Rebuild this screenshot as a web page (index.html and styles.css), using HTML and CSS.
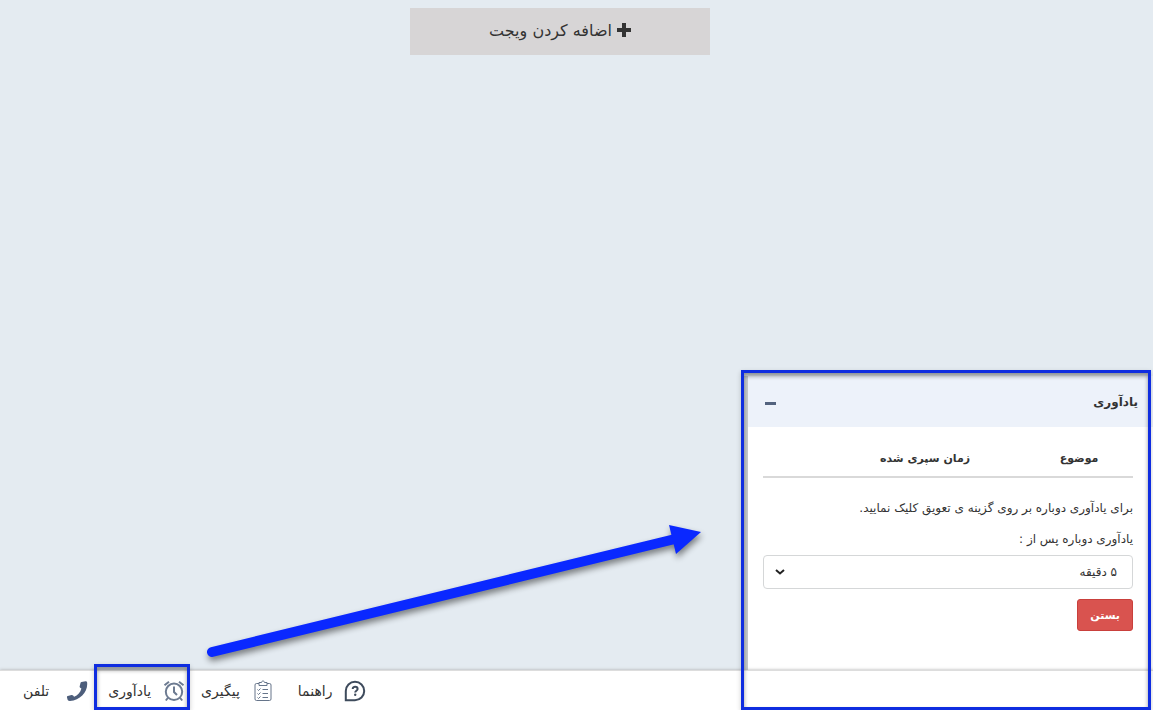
FILE: index.html
```html
<!DOCTYPE html>
<html lang="fa" dir="rtl">
<head>
<meta charset="utf-8">
<title>یادآوری</title>
<link rel="stylesheet" href="styles.css">
</head>
<body>
<main class="desk">
  <button class="add-widget" type="button">
    <svg class="plus" viewBox="0 0 14 14" aria-hidden="true"><path d="M5 0h4v5h5v4H9v5H5V9H0V5h5z"/></svg>
    <span>اضافه کردن ویجت</span>
  </button>
  <section class="panel">
    <header class="panel-head">
      <h2 class="panel-title">یادآوری</h2>
      <button class="minimize" type="button" aria-label="کوچک کردن"><span class="dash"></span></button>
    </header>
    <div class="panel-body">
      <table class="reminders">
        <thead><tr><th class="subject">موضوع</th><th class="elapsed">زمان سپری شده</th><th class="rest"></th></tr></thead>
      </table>
      <p class="hint">برای یادآوری دوباره بر روی گزینه ی تعویق کلیک نمایید.</p>
      <label class="hint" for="snooze">یادآوری دوباره پس از :</label>
      <div class="select-wrap">
        <select class="snooze" id="snooze"><option>۵ دقیقه</option></select>
        <svg class="chevron" viewBox="0 0 10 6" aria-hidden="true"><path d="M1 1 5 4.500 9 1"/></svg>
      </div>
      <button class="close" type="button">بستن</button>
    </div>
  </section>
</main>
<footer class="taskbar">
  <a class="task help" href="#">
    <svg class="icon" viewBox="0 0 22 22" aria-hidden="true"><path class="line" d="M1.800 20.200V11A9.200 9.200 0 1 1 11 20.200Z"/><path class="line" d="M8.700 9c0-3 4.900-2.900 4.900 0 0 1.700-2.400 1.700-2.400 3.400"/><circle class="dot" cx="11.200" cy="14.800" r="1.200"/></svg>
    <span>راهنما</span>
  </a>
  <a class="task follow" href="#">
    <svg class="icon" viewBox="0 0 22 22" aria-hidden="true"><path class="line thin" d="M7 3.500H4.500a1.500 1.500 0 0 0-1.500 1.500v14a1.500 1.500 0 0 0 1.500 1.500h13a1.500 1.500 0 0 0 1.500-1.500V5a1.500 1.500 0 0 0-1.500-1.500H15M7 5.500v-3h2.500c0-2 3-2 3 0H15v3zM5.500 9.500l1 1 2-2M5.500 13.500l1 1 2-2M5.500 17.500l1 1 2-2M10.500 9.500H16M10.500 13.500H16M10.500 17.500H16"/></svg>
    <span>پیگیری</span>
  </a>
  <a class="task reminder" href="#">
    <svg class="icon" viewBox="0 0 22 22" aria-hidden="true"><circle class="line soft" cx="11" cy="11.800" r="8.200"/><path class="line soft" d="M11 6.500V12l3 3M1.500 5.300 6 1.700M16 1.700l4.500 3.600M4.800 18l-2 2.500M17.200 18l2 2.500"/></svg>
    <span>یادآوری</span>
  </a>
  <a class="task phone" href="#">
    <svg class="icon" viewBox="0 0 22 22" aria-hidden="true"><path class="fill" d="M15.500 2 19.500 1.200q1.300-.2 1.600 1C22.300 11.500 14.500 20.500 4 21q-1.700 0-2.300-1L1 17.500q-.3-1.200.8-1.500l3.700-1q1-.2 1.600.5l1 1.200c3.600-1.200 6.400-4.200 7.300-8.100l-1.200-.9q-.8-.6-.5-1.500l.8-3.200q.2-.8 1-1z"/></svg>
    <span>تلفن</span>
  </a>
</footer>
<div class="mark mark-panel"></div>
<div class="mark mark-task"></div>
<svg class="arrow" viewBox="0 0 510 150" aria-hidden="true"><path class="shaft" d="M17 137 480 24"/><path class="tip" d="m474 10 32 7-25 22z"/></svg>
</body>
</html>
```
FILE: styles.css
```css
* { box-sizing: border-box; }
body {
  margin: 0;
  height: 100vh;
  display: flex;
  flex-direction: column;
  overflow: hidden;
  position: relative;
  background: #e4ebf1;
  color: #333;
  font-family: "DejaVu Sans", sans-serif;
  font-size: 12px;
}
button, select { font: inherit; color: inherit; }
.desk {
  flex: 1;
  display: flex;
  flex-direction: column;
  justify-content: space-between;
  padding-top: 8px;
}
.add-widget {
  align-self: center;
  display: flex;
  align-items: center;
  justify-content: center;
  gap: 5px;
  width: 300px;
  height: 47px;
  margin-right: 33px;
  padding-bottom: 4px;
  border: 0;
  background: #d7d5d6;
  font-size: 16px;
}
.plus { width: 14px; height: 14px; fill: #333; }
.panel {
  width: 405px;
  min-height: 294px;
  background: #fff;
  box-shadow: -4px 0 0 #c5c9cd;
}
.panel-head {
  display: flex;
  align-items: center;
  justify-content: space-between;
  height: 51px;
  padding: 0 15px 0 17px;
  background: #edf2fa;
}
.panel-title { margin: 0; font-size: 12px; font-weight: bold; }
.minimize { padding: 8px 0 4px; border: 0; background: none; }
.dash { display: block; width: 11px; height: 3px; background: #53637e; }
.panel-body { padding: 15px 20px 0 15px; }
.reminders { width: 100%; border-collapse: collapse; margin-bottom: 20px; table-layout: fixed; }
.reminders th { height: 35px; padding: 0 0 2px; border-bottom: 2px solid #d9d9d9; font-size: 11px; text-align: center; }
.subject { width: 108px; }
.elapsed { width: 200px; }
.hint { display: block; margin: 0 0 10px; line-height: 21px; }
label.hint { margin-bottom: 5px; }
.select-wrap { position: relative; }
.snooze {
  display: block;
  width: 100%;
  height: 34px;
  padding: 0 15px;
  border: 1px solid #d5d7d8;
  border-radius: 4px;
  background: #fff;
  appearance: none;
}
.chevron {
  position: absolute;
  left: 12px;
  top: 14px;
  width: 10px;
  height: 6px;
  fill: none;
  stroke: #222;
  stroke-width: 2;
}
.close {
  height: 32px;
  margin-top: 10px;
  padding: 0 12px;
  border: 1px solid #c9403c;
  border-radius: 3px;
  background: #d9534f;
  color: #fff;
  font-size: 11px;
  font-weight: bold;
}
.taskbar {
  display: flex;
  justify-content: flex-end;
  align-items: center;
  gap: 16px;
  height: 40px;
  padding-left: 23px;
  background: #fff;
  border-top: 1px solid #ddd;
  box-shadow: 0 0 3px #aaa;
  font-size: 14px;
  z-index: 1;
}
.task { display: flex; align-items: center; gap: 12px; color: #333; text-decoration: none; }
.help { margin-left: 8px; }
.phone { gap: 17px; margin-right: 4px; }
.icon { width: 22px; height: 22px; }
.line { fill: none; stroke: #3e4b5c; stroke-width: 2; }
.line.thin { stroke: #66758a; stroke-width: 1; }
.line.soft { stroke: #6d7b91; }
.fill { fill: #4d5e7b; }
.dot { fill: #3e4b5c; }
.mark { position: absolute; z-index: 2; border: 3px solid #0f2de0; box-shadow: 0 2px 5px #0003, inset 0 3px 4px #0006; pointer-events: none; }
.mark-panel { left: 741px; right: 2px; bottom: 0; height: 340px; }
.mark-task { left: 94px; bottom: 0; width: 96px; height: 46px; }
.arrow { position: absolute; left: 195px; bottom: 45px; width: 510px; height: 150px; z-index: 2; filter: drop-shadow(1px 4px 3px #0007); pointer-events: none; }
.shaft { stroke: #0a28ff; stroke-width: 10; stroke-linecap: round; }
.tip { fill: #0a28ff; }
```
